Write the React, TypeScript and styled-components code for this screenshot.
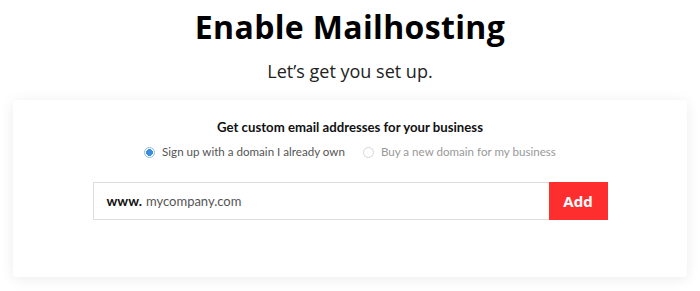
import React, { useState } from "react";
import styled, { createGlobalStyle } from "styled-components";

const GlobalStyle = createGlobalStyle`
  html, body {
    margin: 0;
    padding: 0;
    background: #ffffff;
    font-family: "Open Sans", "Liberation Sans", Arial, sans-serif;
  }
  * { box-sizing: border-box; }
`;

const Page = styled.div`
  display: flex;
  flex-direction: column;
  align-items: center;
  height: 291px;
  padding-top: 7px;
  overflow: hidden;
`;

const Title = styled.h1`
  margin: 0;
  font-size: 32px;
  line-height: 40px;
  font-weight: 700;
  color: #000;
  letter-spacing: 0.35px;
`;

const Subtitle = styled.p`
  margin: 13px 0 0;
  font-size: 18px;
  line-height: 22px;
  color: #222;
`;

const Card = styled.div`
  align-self: stretch;
  margin: 18px 13px 0;
  height: 177px;
  background: #fff;
  border-radius: 3px;
  box-shadow: 0 2px 14px rgba(0, 0, 0, 0.08);
  display: flex;
  flex-direction: column;
  align-items: center;
  padding-top: 18px;
  font-family: "Lato", "Liberation Sans", Arial, sans-serif;
`;

const CardTitle = styled.h2`
  margin: 0;
  font-size: 13.2px;
  line-height: 18px;
  font-weight: 700;
  color: #111;
`;

const RadioRow = styled.div`
  display: flex;
  gap: 18px;
  margin-top: 7px;
`;

const RadioLabel = styled.label<{ $active?: boolean }>`
  display: flex;
  align-items: center;
  gap: 7px;
  font-size: 11.6px;
  line-height: 18px;
  color: ${(p) => (p.$active ? "#555" : "#999")};
  cursor: pointer;
`;

const Dot = styled.span<{ $checked?: boolean }>`
  width: 11px;
  height: 11px;
  border-radius: 50%;
  border: 1px solid ${(p) => (p.$checked ? "#8fbce8" : "#d6d6d6")};
  background: ${(p) => (p.$checked ? "radial-gradient(circle, #3a8ee0 0 3.2px, #fff 3.6px)" : "#fff")};
`;

const Field = styled.div`
  display: flex;
  width: 515px;
  height: 38px;
  margin-top: 21px;
  border: 1px solid #dedede;
  border-right: none;
`;

const Prefix = styled.span`
  display: flex;
  align-items: center;
  padding-left: 13px;
  font-size: 13.5px;
  font-weight: 700;
  color: #111;
`;

const Input = styled.input`
  flex: 1;
  border: none;
  outline: none;
  padding-left: 4px;
  font-family: inherit;
  font-size: 13px;
  color: #555;
  &::placeholder { color: #555; }
`;

const AddButton = styled.button`
  width: 59px;
  margin: -1px 0;
  border: none;
  background: #ff2e2e;
  color: #fff;
  font-family: "Open Sans", "Liberation Sans", Arial, sans-serif;
  font-size: 15px;
  font-weight: 700;
  cursor: pointer;
`;

export default function App() {
  const [own, setOwn] = useState(true);
  return (
    <>
      <GlobalStyle />
      <Page>
        <Title>Enable Mailhosting</Title>
        <Subtitle>Let’s get you set up.</Subtitle>
        <Card>
          <CardTitle>Get custom email addresses for your business</CardTitle>
          <RadioRow>
            <RadioLabel $active onClick={() => setOwn(true)}>
              <Dot $checked={own} />
              Sign up with a domain I already own
            </RadioLabel>
            <RadioLabel onClick={() => setOwn(false)}>
              <Dot $checked={!own} />
              Buy a new domain for my business
            </RadioLabel>
          </RadioRow>
          <Field>
            <Prefix>www.</Prefix>
            <Input placeholder="mycompany.com" />
            <AddButton>Add</AddButton>
          </Field>
        </Card>
      </Page>
    </>
  );
}
